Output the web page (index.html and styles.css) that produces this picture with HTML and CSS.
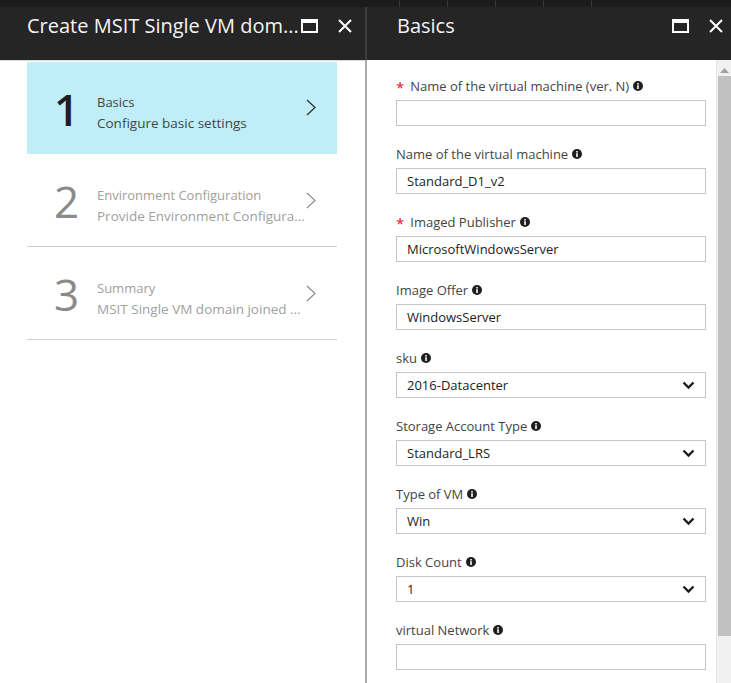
FILE: index.html
```html
<!DOCTYPE html>
<html>
<head>
<meta charset="utf-8">
<link rel="stylesheet" href="styles.css">
</head>
<body>
<div class="strip">
  <span class="seg s1"></span><span class="seg"></span><span class="seg"></span><span class="seg"></span><span class="seg"></span><span class="seg last"></span>
</div>
<div class="main">
  <section class="left">
    <header class="hdr">
      <h1 class="title">Create MSIT Single VM dom...</h1>
      <div class="hicons">
        <span class="maxi"></span>
        <svg class="close" width="14" height="14" viewBox="0 0 14 14"><path d="M1 1L13 13M13 1L1 13" stroke="#fff" stroke-width="2"/></svg>
      </div>
    </header>
    <div class="steps">
      <div class="step active">
        <div class="num">1</div>
        <div class="txt">
          <div class="st">Basics</div>
          <div class="sd">Configure basic settings</div>
        </div>
        <svg class="chev" width="10" height="17" viewBox="0 0 10 17"><path d="M1 1L9 8.5L1 16" fill="none" stroke="#333" stroke-width="1.3"/></svg>
      </div>
      <div class="step">
        <div class="num">2</div>
        <div class="txt">
          <div class="st">Environment Configuration</div>
          <div class="sd">Provide Environment Configura...</div>
        </div>
        <svg class="chev" width="10" height="17" viewBox="0 0 10 17"><path d="M1 1L9 8.5L1 16" fill="none" stroke="#888" stroke-width="1.1"/></svg>
      </div>
      <div class="step">
        <div class="num">3</div>
        <div class="txt">
          <div class="st">Summary</div>
          <div class="sd">MSIT Single VM domain joined ...</div>
        </div>
        <svg class="chev" width="10" height="17" viewBox="0 0 10 17"><path d="M1 1L9 8.5L1 16" fill="none" stroke="#888" stroke-width="1.1"/></svg>
      </div>
    </div>
  </section>
  <div class="divider"><div class="dtop"></div></div>
  <section class="right">
    <header class="hdr rhdr">
      <h1 class="title">Basics</h1>
      <div class="hicons">
        <span class="maxi"></span>
        <svg class="close" width="14" height="14" viewBox="0 0 14 14"><path d="M1 1L13 13M13 1L1 13" stroke="#fff" stroke-width="2"/></svg>
      </div>
    </header>
    <div class="rbody">
      <div class="form">
        <div class="field">
          <label class="lbl"><span class="req">*</span>Name of the virtual machine (ver. N)<svg class="info" width="10" height="10" viewBox="0 0 10 10"><circle cx="5" cy="5" r="5" fill="#1e1e1e"/><rect x="4.2" y="4.2" width="1.6" height="3.8" fill="#fff"/><rect x="4.2" y="2" width="1.6" height="1.5" fill="#fff"/></svg></label>
          <div class="inp"></div>
        </div>
        <div class="field">
          <label class="lbl">Name of the virtual machine<svg class="info" width="10" height="10" viewBox="0 0 10 10"><circle cx="5" cy="5" r="5" fill="#1e1e1e"/><rect x="4.2" y="4.2" width="1.6" height="3.8" fill="#fff"/><rect x="4.2" y="2" width="1.6" height="1.5" fill="#fff"/></svg></label>
          <div class="inp">Standard_D1_v2</div>
        </div>
        <div class="field">
          <label class="lbl"><span class="req">*</span>Imaged Publisher<svg class="info" width="10" height="10" viewBox="0 0 10 10"><circle cx="5" cy="5" r="5" fill="#1e1e1e"/><rect x="4.2" y="4.2" width="1.6" height="3.8" fill="#fff"/><rect x="4.2" y="2" width="1.6" height="1.5" fill="#fff"/></svg></label>
          <div class="inp">MicrosoftWindowsServer</div>
        </div>
        <div class="field">
          <label class="lbl">Image Offer<svg class="info" width="10" height="10" viewBox="0 0 10 10"><circle cx="5" cy="5" r="5" fill="#1e1e1e"/><rect x="4.2" y="4.2" width="1.6" height="3.8" fill="#fff"/><rect x="4.2" y="2" width="1.6" height="1.5" fill="#fff"/></svg></label>
          <div class="inp">WindowsServer</div>
        </div>
        <div class="field">
          <label class="lbl">sku<svg class="info" width="10" height="10" viewBox="0 0 10 10"><circle cx="5" cy="5" r="5" fill="#1e1e1e"/><rect x="4.2" y="4.2" width="1.6" height="3.8" fill="#fff"/><rect x="4.2" y="2" width="1.6" height="1.5" fill="#fff"/></svg></label>
          <div class="inp sel"><span>2016-Datacenter</span><svg class="dd" width="13" height="9" viewBox="0 0 13 9"><path d="M1.5 1.5L6.5 6.5L11.5 1.5" fill="none" stroke="#1e1e1e" stroke-width="2.4"/></svg></div>
        </div>
        <div class="field">
          <label class="lbl">Storage Account Type<svg class="info" width="10" height="10" viewBox="0 0 10 10"><circle cx="5" cy="5" r="5" fill="#1e1e1e"/><rect x="4.2" y="4.2" width="1.6" height="3.8" fill="#fff"/><rect x="4.2" y="2" width="1.6" height="1.5" fill="#fff"/></svg></label>
          <div class="inp sel"><span>Standard_LRS</span><svg class="dd" width="13" height="9" viewBox="0 0 13 9"><path d="M1.5 1.5L6.5 6.5L11.5 1.5" fill="none" stroke="#1e1e1e" stroke-width="2.4"/></svg></div>
        </div>
        <div class="field">
          <label class="lbl">Type of VM<svg class="info" width="10" height="10" viewBox="0 0 10 10"><circle cx="5" cy="5" r="5" fill="#1e1e1e"/><rect x="4.2" y="4.2" width="1.6" height="3.8" fill="#fff"/><rect x="4.2" y="2" width="1.6" height="1.5" fill="#fff"/></svg></label>
          <div class="inp sel"><span>Win</span><svg class="dd" width="13" height="9" viewBox="0 0 13 9"><path d="M1.5 1.5L6.5 6.5L11.5 1.5" fill="none" stroke="#1e1e1e" stroke-width="2.4"/></svg></div>
        </div>
        <div class="field">
          <label class="lbl">Disk Count<svg class="info" width="10" height="10" viewBox="0 0 10 10"><circle cx="5" cy="5" r="5" fill="#1e1e1e"/><rect x="4.2" y="4.2" width="1.6" height="3.8" fill="#fff"/><rect x="4.2" y="2" width="1.6" height="1.5" fill="#fff"/></svg></label>
          <div class="inp sel"><span>1</span><svg class="dd" width="13" height="9" viewBox="0 0 13 9"><path d="M1.5 1.5L6.5 6.5L11.5 1.5" fill="none" stroke="#1e1e1e" stroke-width="2.4"/></svg></div>
        </div>
        <div class="field">
          <label class="lbl">virtual Network<svg class="info" width="10" height="10" viewBox="0 0 10 10"><circle cx="5" cy="5" r="5" fill="#1e1e1e"/><rect x="4.2" y="4.2" width="1.6" height="3.8" fill="#fff"/><rect x="4.2" y="2" width="1.6" height="1.5" fill="#fff"/></svg></label>
          <div class="inp"></div>
        </div>
      </div>
      <div class="sbar">
        <div class="sarrow"><svg width="9" height="5" viewBox="0 0 9 5"><path d="M0 5L4.5 0L9 5Z" fill="#a0a0a0"/></svg></div>
        <div class="thumb"></div>
      </div>
    </div>
  </section>
</div>
</body>
</html>
```

FILE: styles.css
```css
* { box-sizing: border-box; }
html, body { margin: 0; padding: 0; }
body {
  width: 731px;
  height: 683px;
  overflow: hidden;
  background: #fff;
  font-family: "Open Sans", "Noto Sans", sans-serif;
  color: #333;
}
.strip {
  height: 7px;
  background: #1b1b1b;
  display: flex;
}
.seg { width: 48px; border-right: 1px solid #383838; flex: none; }
.seg.s1 { width: 400px; }
.seg.last { flex: 1; border-right: none; }
.main {
  display: flex;
  height: 676px;
}
.left { width: 365px; flex: none; display: flex; flex-direction: column; }
.divider { width: 2px; flex: none; background: #ababab; }
.dtop { height: 53px; background: #3c3c3c; }
.right { flex: 1; display: flex; flex-direction: column; min-width: 0; }
.hdr {
  height: 53px;
  background: #252525;
  display: flex;
  align-items: flex-start;
  padding: 6px 13px 0 27px;
  flex: none;
}
.rhdr { padding-left: 30px; padding-right: 8px; }
.title {
  margin: 0;
  font-weight: 400;
  font-size: 20px;
  line-height: 26px;
  color: #f4f4f4;
  flex: 1;
  white-space: nowrap;
  overflow: hidden;
}
.hicons { display: flex; align-items: center; gap: 20px; padding-top: 6px; }
.maxi {
  width: 17px;
  height: 14px;
  border: 2px solid #fff;
  border-top-width: 4px;
  display: block;
}
.close { display: block; }
.steps { padding: 1px 28px 0 27px; border-top: 1px solid #d9d9d9; }
.step {
  height: 93px;
  display: flex;
  align-items: center;
  border-bottom: 1px solid #cfcfcf;
  padding-left: 27px;
  padding-right: 21px;
}
.step.active { background: #bfeef9; border-bottom-color: #bfeef9; height: 92px; }
.num {
  width: 43px;
  font-size: 44px;
  line-height: 44px;
  color: #8a8a8a;
  font-weight: 400;
  margin-top: 2px;
}
.active .num { color: #1e1e1e; font-weight: 600; }
.txt { flex: 1; padding-top: 10px; font-size: 13px; color: #a0a0a0; white-space: nowrap; }
.step:not(.active) .txt { padding-top: 12px; }
.active .txt { color: #444; }
.st { line-height: 20px; }
.sd { line-height: 22px; font-size: 13.5px; }
.chev { display: block; margin-top: 0; }
.rbody { flex: 1; display: flex; min-height: 0; }
.form { flex: 1; padding: 17px 10px 0 29px; }
.field { margin-bottom: 19px; }
.lbl {
  display: flex;
  align-items: center;
  height: 18px;
  font-size: 13px;
  color: #444;
  margin-bottom: 5px;
  white-space: nowrap;
}
.req { color: #e0151b; margin-right: 6px; font-size: 15px; position: relative; top: 1px; }
.info { margin-left: 4px; flex: none; }
.inp {
  height: 26px;
  border: 1px solid #c6c6c6;
  padding: 0 10px;
  font-size: 13px;
  line-height: 24px;
  color: #222;
  display: flex;
  align-items: center;
}
.sel span { flex: 1; }
.dd { display: block; }
.sbar {
  width: 15px;
  flex: none;
  background: #f0f0f0;
  display: flex;
  flex-direction: column;
  border-left: 1px solid #e6e6e6;
}
.sarrow { height: 16px; display: flex; justify-content: center; align-items: center; padding-top: 4px; }
.thumb { height: 560px; background: #c1c1c1; margin: 0 0 0 1px; }
```
